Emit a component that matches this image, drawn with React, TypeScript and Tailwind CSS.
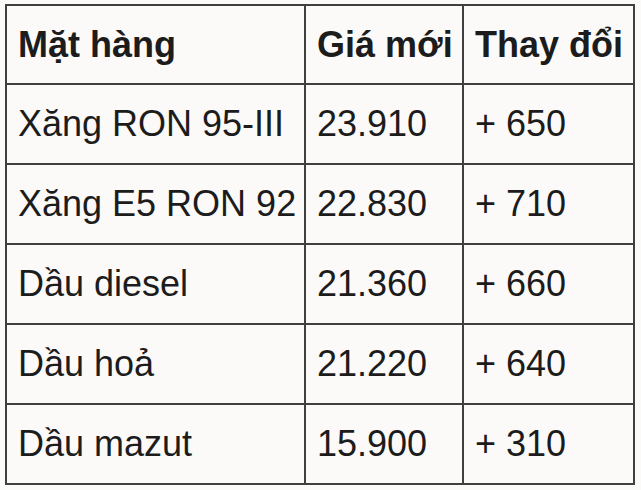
import React from 'react';

type Row = { name: string; price: string; change: string };

const rows: Row[] = [
    { name: 'Xăng RON 95-III', price: '23.910', change: '+ 650' },
    { name: 'Xăng E5 RON 92', price: '22.830', change: '+ 710' },
    { name: 'Dầu diesel', price: '21.360', change: '+ 660' },
    { name: 'Dầu hoả', price: '21.220', change: '+ 640' },
    { name: 'Dầu mazut', price: '15.900', change: '+ 310' },
];

const cell = 'border-2 border-[#3f3f3f] px-[11px] text-left align-middle whitespace-nowrap';

const App: React.FC = () => {
    return (
        <div className="w-[641px] h-[490px] bg-[#fbfaf8] pt-[4px] pl-[5px] font-['Liberation_Sans',Arial,sans-serif] text-[#1c1c1c] text-[36px] leading-none">
            <table className="table-fixed border-collapse w-[630px]">
                <colgroup>
                    <col className="w-[299px]" />
                    <col className="w-[158px]" />
                    <col className="w-[171px]" />
                </colgroup>
                <thead>
                    <tr className="h-[79px]">
                        <th className={cell + ' font-bold'}>Mặt hàng</th>
                        <th className={cell + ' font-bold'}>Giá mới</th>
                        <th className={cell + ' font-bold'}>Thay đổi</th>
                    </tr>
                </thead>
                <tbody>
                    {rows.map(r => (
                        <tr key={r.name} className="h-[80px]">
                            <td className={cell}>{r.name}</td>
                            <td className={cell}>{r.price}</td>
                            <td className={cell}>{r.change}</td>
                        </tr>
                    ))}
                </tbody>
            </table>
        </div>
    );
};

export default App;
